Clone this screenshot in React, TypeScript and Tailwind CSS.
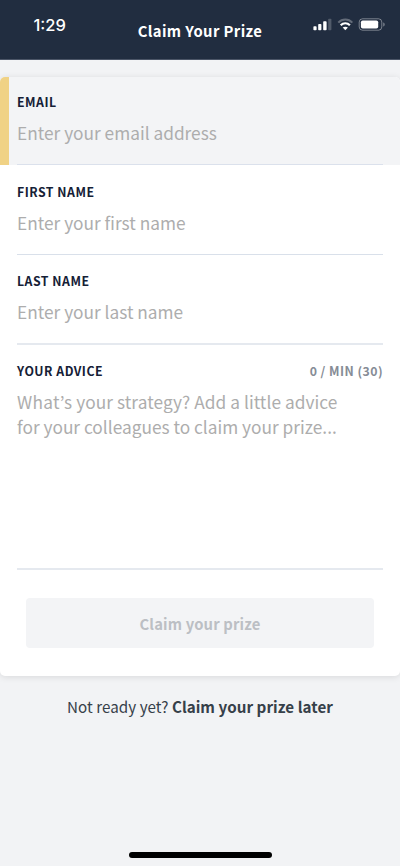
import type { ReactNode } from "react";

function StatusIcons() {
  return (
    <svg width="72" height="14" viewBox="0 0 72 14" className="absolute left-[313px] top-[18px]" fill="none">
      <rect x="0.4" y="8.2" width="3.2" height="4" rx="0.8" fill="#fff" />
      <rect x="5.2" y="6" width="3.2" height="6.2" rx="0.8" fill="#fff" />
      <rect x="10.2" y="3.2" width="3.4" height="9" rx="0.8" fill="#fff" />
      <rect x="15.2" y="0.8" width="3.2" height="11.4" rx="0.8" fill="#fff" opacity="0.22" />
      <path d="M25.3 4.6 C29.2 0.4 35.4 0.4 39.3 4.6" stroke="#fff" strokeWidth="2.1" opacity="0.3" />
      <path d="M27.7 7.3 C30.3 4.5 34.3 4.5 36.9 7.3" stroke="#fff" strokeWidth="2.1" />
      <path d="M32.3 12.2 L29.7 9.6 C31.1 8.3 33.5 8.3 34.9 9.6 Z" fill="#fff" />
      <rect x="46.2" y="0.8" width="22.6" height="11.4" rx="3.3" stroke="#fff" strokeOpacity="0.4" />
      <rect x="47.9" y="2.5" width="17.3" height="8" rx="1.8" fill="#fff" />
      <path d="M70.3 4.5 C72.1 5.2 72.1 7.8 70.3 8.5 Z" fill="#fff" opacity="0.45" />
    </svg>
  );
}

function Label({ children }: { children: ReactNode }) {
  return <span className="text-[12.3px] leading-4 font-bold tracking-[0.5px] text-[#152036]">{children}</span>;
}

function Field({ label, placeholder, className }: { label: string; placeholder: string; className: string }) {
  return (
    <label className={`mx-[17px] flex shrink-0 flex-col ${className}`}>
      <Label>{label}</Label>
      <span className="mt-[11px] text-[17.3px] leading-6 whitespace-nowrap text-[#adadad]">{placeholder}</span>
    </label>
  );
}

export default function App() {
  return (
    <main className="relative flex h-[866px] w-[400px] flex-col overflow-hidden bg-[#f2f3f5] font-['Noto_Sans_CJK_KR',sans-serif]">
      <header className="relative h-[60px] shrink-0 border-b border-[#4b5567] bg-[#212d40] text-white">
        <span className="absolute left-[33.5px] top-[14px] font-['Inter',sans-serif] text-[16.5px] leading-[22px] font-medium">1:29</span>
        <h1 className="pt-[20px] text-center text-[14.8px] leading-[22px] font-bold tracking-[0.4px]">Claim Your Prize</h1>
        <StatusIcons />
      </header>

      <form className="mt-[17px] flex h-[599px] shrink-0 flex-col rounded-[5px] bg-white shadow-[0_1px_7px_rgba(0,0,0,0.11)]">
        <div className="relative h-[88px] shrink-0 rounded-t-[5px] bg-[#f3f4f6]">
          <div className="absolute left-0 top-0 h-full w-[8.5px] rounded-tl-[5px] bg-[#f0d285]" />
          <Field label="EMAIL" placeholder="Enter your email address" className="h-[88px] border-b border-[#dbe1ec] pt-[17px]" />
        </div>
        <Field label="FIRST NAME" placeholder="Enter your first name" className="h-[90px] border-b border-[#d9e0ea] pt-[19px]" />
        <Field label="LAST NAME" placeholder="Enter your last name" className="h-[90px] border-b-2 border-[#e5e9ef] pt-[18px]" />
        <div className="mx-[17px] flex h-[225px] shrink-0 flex-col border-b-2 border-[#e5e9ef] pt-[18px]">
          <div className="flex justify-between">
            <Label>YOUR ADVICE</Label>
            <span className="text-[12.3px] leading-4 font-bold tracking-[0.45px] text-[#868c96]">0 / MIN (30)</span>
          </div>
          <p className="mt-[11px] text-[17.3px] leading-[24.5px] whitespace-nowrap text-[#adadad]">
            <span className="tracking-[0.05px]">
              <span className="tracking-[0.3px]">What’s</span> your strategy? Add a little advice
            </span>
            <br />
            for your colleagues to claim your prize...
          </p>
        </div>
        <button type="button" className="mx-[26px] mt-[28px] h-[50px] rounded-[4px] bg-[#f3f4f6] pt-px text-[14.8px] leading-[22px] font-bold tracking-[0.15px] text-[#bcbfc4]">
          Claim your prize
        </button>
      </form>

      <p className="mt-[19px] text-center text-[15.2px] leading-[22px] tracking-[0.04px] whitespace-nowrap text-[#364049]">
        Not ready yet? <strong className="font-bold">Claim your prize later</strong>
      </p>
      <div className="mx-auto mt-auto mb-[8.5px] h-[5.5px] w-[143px] rounded-full bg-black" />
    </main>
  );
}
